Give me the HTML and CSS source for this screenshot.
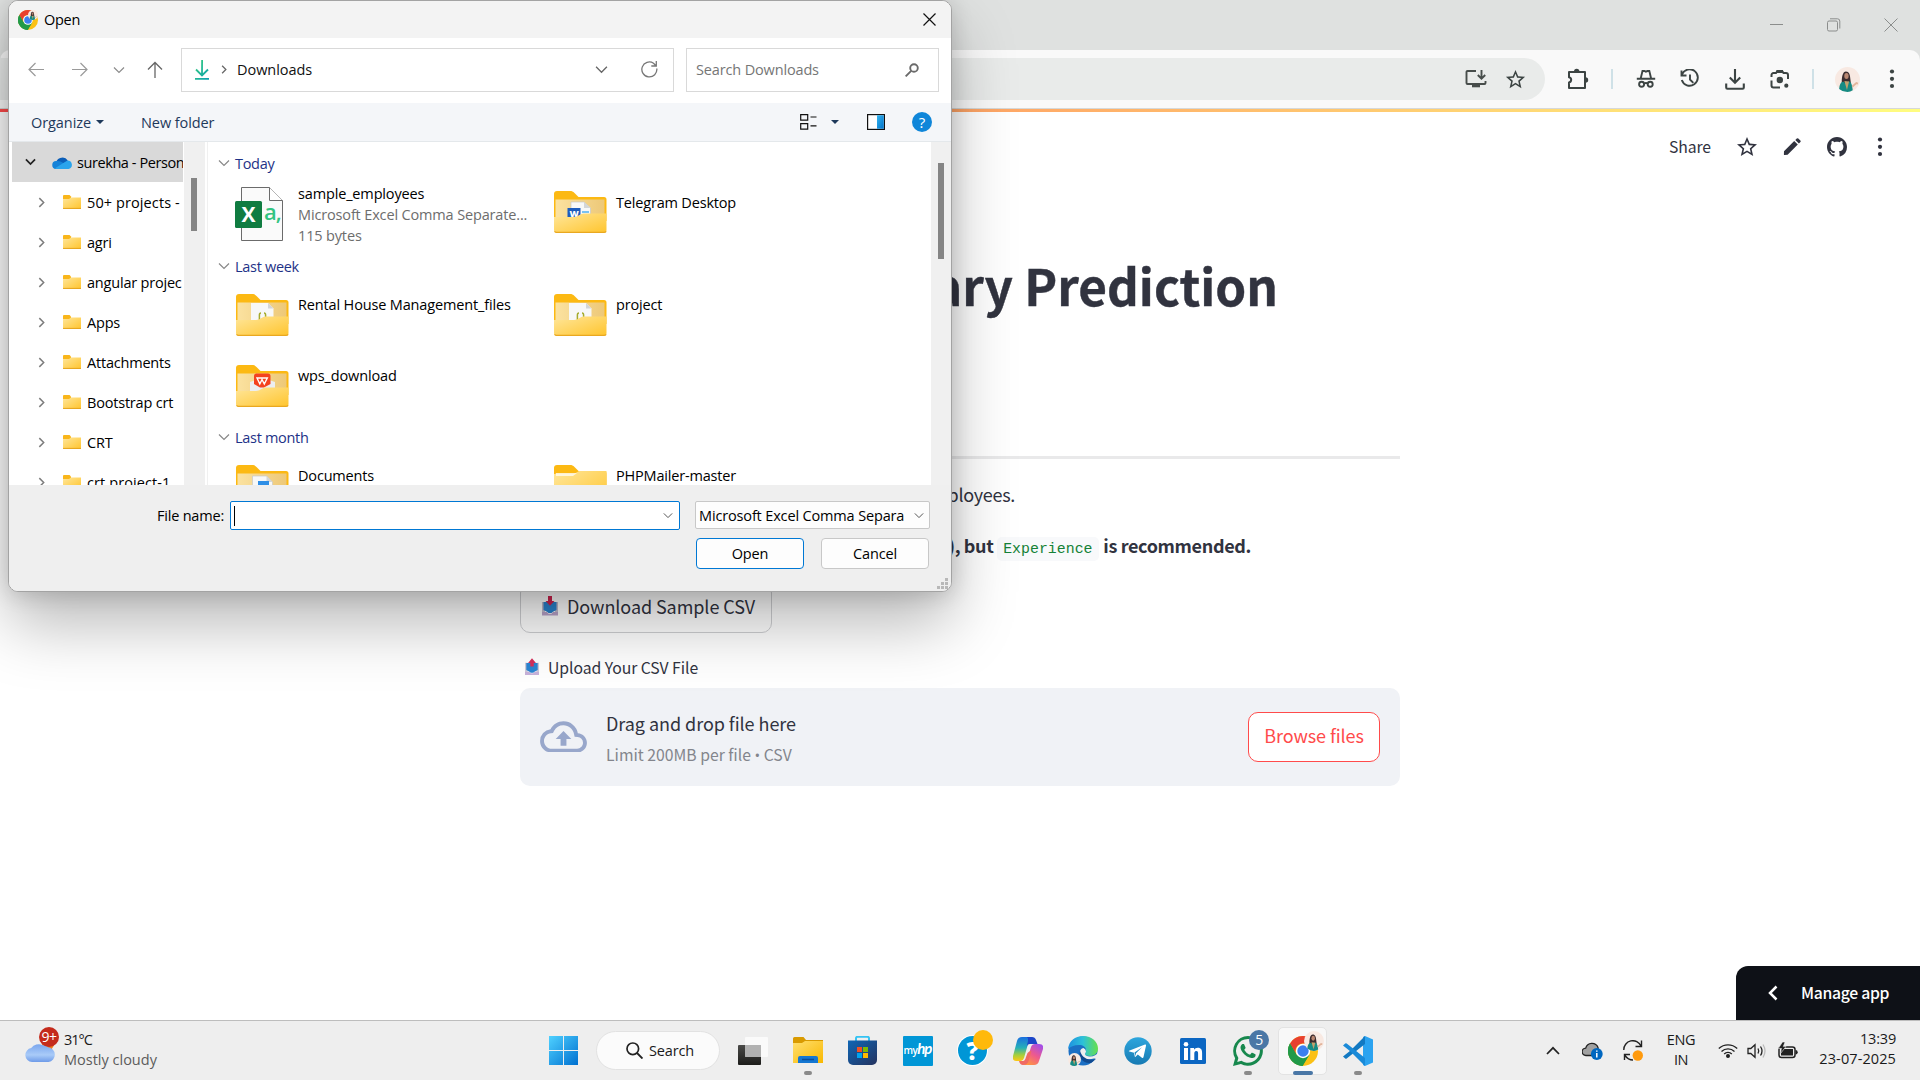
FILE: index.html
```html
<!DOCTYPE html>
<html lang="en">
<head>
<meta charset="utf-8">
<title>Salary Prediction</title>
<link rel="stylesheet" href="styles.css">
</head>
<body>
<svg class="defs" width="0" height="0" aria-hidden="true">
  <defs>
    <linearGradient id="gFront" x1="0" y1="0" x2="1" y2="1"><stop offset="0" stop-color="#ffe69a"/><stop offset="1" stop-color="#ffc52e"/></linearGradient>
    <linearGradient id="gInner" x1="0" y1="0" x2="1" y2="0"><stop offset="0" stop-color="#fbe2a0"/><stop offset="1" stop-color="#edc878"/></linearGradient>
    <linearGradient id="gDown" x1="0" y1="0" x2="1" y2="1"><stop offset="0" stop-color="#3bd07c"/><stop offset="1" stop-color="#0a9fb0"/></linearGradient>
    <linearGradient id="gPane" x1="0" y1="0" x2="1" y2="1"><stop offset="0" stop-color="#35b5f0"/><stop offset="1" stop-color="#0072c9"/></linearGradient>
    <linearGradient id="gWin" gradientUnits="userSpaceOnUse" x1="0" y1="0" x2="29" y2="29"><stop offset="0" stop-color="#4fd1ff"/><stop offset="1" stop-color="#0070d0"/></linearGradient>
    <linearGradient id="gTele" x1="0" y1="0" x2="0" y2="1"><stop offset="0" stop-color="#2ea6dd"/><stop offset="1" stop-color="#177ab3"/></linearGradient>
    <linearGradient id="gStore" x1="0" y1="0" x2="1" y2="1"><stop offset="0" stop-color="#0f66b5"/><stop offset="1" stop-color="#25335f"/></linearGradient>
    <linearGradient id="gEx" x1="0" y1="0" x2="1" y2="1"><stop offset="0" stop-color="#ffdf70"/><stop offset="1" stop-color="#f9b800"/></linearGradient>
    <linearGradient id="gEdge" x1="0" y1="0" x2="1" y2="0"><stop offset="0" stop-color="#1d8fe0"/><stop offset=".5" stop-color="#2dc1d8"/><stop offset="1" stop-color="#66e04a"/></linearGradient>
    <linearGradient id="gCopA" x1="0" y1="0" x2="0" y2="1"><stop offset="0" stop-color="#1a6fe0"/><stop offset=".45" stop-color="#25b0b8"/><stop offset=".75" stop-color="#a5cf3c"/><stop offset="1" stop-color="#ffc814"/></linearGradient>
    <linearGradient id="gCopB" x1="0.8" y1="0" x2="0.2" y2="1"><stop offset="0" stop-color="#a34ee8"/><stop offset=".5" stop-color="#ef5a8c"/><stop offset="1" stop-color="#ff9a3c"/></linearGradient>
    <linearGradient id="gCloud" x1="0" y1="0" x2="0" y2="1"><stop offset="0" stop-color="#7aa6ee"/><stop offset=".6" stop-color="#a9cbf8"/><stop offset="1" stop-color="#6e9be8"/></linearGradient>
    <linearGradient id="gTaskD" x1="0" y1="0" x2="0" y2="1"><stop offset="0" stop-color="#4a4a48"/><stop offset="1" stop-color="#1c1c1a"/></linearGradient>

    <symbol id="folder" viewBox="0 0 54 42">
      <path d="M1 3a3 3 0 0 1 3-3h13c2 0 3 .6 4.500 2l4 4H51a2.500 2.500 0 0 1 2.500 2.500V30H1z" fill="#fcb913"/>
      <path d="M2.500 8.500h49V32h-49z" fill="url(#gInner)"/>
    </symbol>
    <symbol id="folderfront" viewBox="0 0 54 42">
      <path d="M1 26h20c2 0 3-.4 4.500-1.400l2-1c1.200-.8 2.500-1.100 4-1.100H53.500V39a2.500 2.500 0 0 1-2.500 2.500H3.500A2.500 2.500 0 0 1 1 39z" fill="url(#gFront)"/>
      <path d="M1.500 40.300q.8 1 2 1H51q1.500 0 2.200-1" fill="none" stroke="#e9a820" stroke-width="1.200"/>
    </symbol>
    <symbol id="codefile" viewBox="0 0 54 42">
      <path d="M16 9h17l5.500 5.500V32H16z" fill="#f7f8f8"/><path d="M33 9l5.500 5.500H33z" fill="#d3d6d8"/>
      <path d="M26 19q-1.600 0-1.600 2v5M29 19q1.600 0 1.600 2v5" fill="none" stroke="#a5ab2d" stroke-width="1.500"/>
    </symbol>
    <symbol id="smallfolder" viewBox="0 0 18 14">
      <path d="M0 1a1 1 0 0 1 1-1h5.500l1.500 1.500V5H0z" fill="#f9b61a"/><path d="M0 4h6l2-1.500h10V13a1 1 0 0 1-1 1H1a1 1 0 0 1-1-1z" fill="url(#gFront)"/><path d="M0 13.400h18" stroke="#e5a31c" stroke-width="1"/>
    </symbol>
    <symbol id="chrome" viewBox="0 0 30 30">
      <circle cx="15" cy="15" r="15" fill="#fbc116"/>
      <path d="M2 7.500A15 15 0 0 0 14.500 30L21.200 18.500 15 15 8.500 18.700z" fill="#229a49"/>
      <path d="M2 7.500a15 15 0 0 1 13-7.500 15 15 0 0 1 13 7.500H15a7.500 7.500 0 0 0-6.500 11.300z" fill="#e8402f"/>
      <path d="M2 7.500l6.500 11.300A7.500 7.500 0 0 0 15 22.500l6.500-3.700L14.500 30A15 15 0 0 1 2 7.500z" fill="#229a49"/>
      <circle cx="15" cy="15" r="7.200" fill="#fff"/><circle cx="15" cy="15" r="5.700" fill="#3c7ff0"/>
    </symbol>
    <symbol id="avatar" viewBox="0 0 24 24">
      <circle cx="12" cy="12" r="12" fill="#f8e9e2"/>
      <path d="M6.500 15C6.500 9 7.500 4.300 10.500 4.300S14.500 7 14.800 12l.5 4H6z" fill="#3b2c2e"/>
      <ellipse cx="11" cy="8.700" rx="2.100" ry="2.900" fill="#b98670"/>
      <path d="M4 21c.3-4 1.500-6.500 4-7l2.500 2 2.500-2.300c2.500.6 3.500 3 4 8.500A12 12 0 0 1 12 24a12 12 0 0 1-8-3z" fill="#168b83"/>
      <path d="M9 13.500l2.500 8.500 2-8z" fill="#c3a06c"/><path d="M16.500 19l4-3.500 1.500.5" stroke="#e2b59c" stroke-width="1.800" fill="none"/>
    </symbol>
    <symbol id="chev" viewBox="0 0 12 8"><path d="M1 1.500l5 5 5-5" fill="none" stroke="currentColor" stroke-width="1.200"/></symbol>
    <symbol id="chevr" viewBox="0 0 8 12"><path d="M1.500 1l5 5-5 5" fill="none" stroke="currentColor" stroke-width="1.700"/></symbol>
    <symbol id="star" viewBox="0 0 24 24"><path fill="currentColor" d="M22 9.240l-7.190-.62L12 2 9.190 8.630 2 9.240l5.460 4.730L5.820 21 12 17.270 18.180 21l-1.630-7.030L22 9.240zM12 15.400l-3.760 2.270 1-4.280-3.320-2.880 4.380-.38L12 6.100l1.710 4.040 4.380.38-3.320 2.880 1 4.280L12 15.400z"/></symbol>
    <symbol id="dots" viewBox="0 0 6 20"><circle cx="3" cy="2.500" r="2.100" fill="currentColor"/><circle cx="3" cy="9.800" r="2.100" fill="currentColor"/><circle cx="3" cy="17" r="2.100" fill="currentColor"/></symbol>
  </defs>
</svg>

<div class="screen">
  <header class="titlebar">
    <svg width="14" height="14" viewBox="0 0 14 14"><path d="M0 6.500h13" stroke="#8b8d8c"/></svg>
    <svg width="14" height="14" viewBox="0 0 14 14"><rect x=".5" y="3" width="10" height="10" rx="1.500" fill="none" stroke="#8b8d8c"/><path d="M3 .8h7.500a2.300 2.300 0 0 1 2.300 2.300V10.500" fill="none" stroke="#8b8d8c"/></svg>
    <svg width="14" height="14" viewBox="0 0 14 14"><path d="M.5.500l13 13M13.500.500l-13 13" stroke="#8b8d8c"/></svg>
  </header>
  <div class="toolbar-wrap">
    <div class="toolbar">
      <div class="omnibox">
        <svg width="22" height="20" viewBox="0 0 22 20"><path d="M11 2H2.500a1 1 0 0 0-1 1v11a1 1 0 0 0 1 1h17a1 1 0 0 0 1-1v-2" fill="none" stroke="#474d4b" stroke-width="1.900"/><path d="M7 15.500h8v2.800H7z" fill="#474d4b"/><path d="M16.500 1v8M12.800 6l3.700 3.700L20.200 6" fill="none" stroke="#474d4b" stroke-width="1.900"/></svg>
        <svg width="23" height="23"><use href="#star"/></svg>
      </div>
      <svg class="i-puz" width="22" height="22" viewBox="0 0 22 22"><path d="M2 4h16v16H2v-5.500a2.700 2.700 0 0 0 0-5.300z" fill="none" stroke="#3c4443" stroke-width="2" stroke-linejoin="round"/><path d="M7 3.500a2.700 2.700 0 0 1 5.400 0zM18.500 9.300a2.700 2.700 0 0 1 0 5.400z" fill="#3c4443"/></svg>
      <i class="sep"></i>
      <svg class="i-inc" width="20" height="20" viewBox="0 0 20 20" fill="none" stroke="#3c4443" stroke-width="1.900"><path d="M.8 9.800h18.400M4.800 9L6.500 2h1.800l1.500.7L11.500 2h1.800L15 9"/><circle cx="5.600" cy="15.300" r="2.500"/><circle cx="14.200" cy="15.300" r="2.500"/><path d="M8 14.500q2-1 4 0"/></svg>
      <svg class="i-his" width="20" height="20" viewBox="0 0 20 20" fill="none" stroke="#3c4443" stroke-width="1.900"><path d="M2 5.500A8.200 8.200 0 1 1 1.800 11M1.500 1.500v5H6.500M10 5.500V10.500l3.300 3.300"/></svg>
      <svg class="i-dl" width="20" height="21" viewBox="0 0 20 21" fill="none" stroke="#3c4443" stroke-width="2.100"><path d="M10 0v13M4.800 8.500l5.200 5.200 5.200-5.200M1.200 14.500v4a1.200 1.200 0 0 0 1.200 1.200h15.200a1.200 1.200 0 0 0 1.200-1.200v-4"/></svg>
      <svg class="i-len" width="20" height="20" viewBox="0 0 20 20"><path d="M1.500 8V6a2 2 0 0 1 2-2h2.500L7.300 2.200h5L13.500 4H16a2 2 0 0 1 2 2v4M1.500 11.500v5a2 2 0 0 0 2 2H10" fill="none" stroke="#3c4443" stroke-width="2"/><path d="M6.500 1h6.500v3H6.500z" fill="#3c4443"/><circle cx="9.800" cy="11" r="3.200" fill="#3c4443"/><circle cx="16.300" cy="16.700" r="2.100" fill="#3c4443"/></svg>
      <i class="sep"></i>
      <svg class="i-ava" width="25" height="25"><use href="#avatar"/></svg>
      <svg class="i-dot" width="6" height="20"><use href="#dots"/></svg>
    </div>
  </div>
  <div class="rainbow"></div>

  <main class="app">
    <nav class="appnav">
      <span>Share</span>
      <svg width="24" height="24"><use href="#star"/></svg>
      <svg width="18" height="18" viewBox="0 0 18 18"><path d="M1 13.200L11.200 3l3.600 3.600L4.600 16.800 1.500 17q-.7 0-.6-.8zM12.300 1.900l1.500-1.400q.8-.6 1.500 0l2.100 2.100q.6.8 0 1.500L15.900 5.500z" fill="#31333f"/></svg>
      <svg width="20" height="20" viewBox="0 0 16 16"><path fill="#31333f" d="M8 0C3.580 0 0 3.580 0 8c0 3.540 2.290 6.530 5.470 7.590.4.070.55-.17.55-.38 0-.19-.01-.82-.01-1.490-2.010.37-2.530-.49-2.690-.94-.09-.23-.48-.94-.82-1.130-.28-.15-.68-.52-.01-.53.630-.01 1.080.58 1.230.82.72 1.210 1.870.87 2.330.66.070-.52.28-.87.51-1.070-1.780-.2-3.640-.89-3.640-3.950 0-.87.310-1.590.82-2.150-.08-.2-.36-1.020.08-2.120 0 0 .67-.21 2.200.82.640-.18 1.320-.27 2-.27s1.360.09 2 .27c1.530-1.040 2.200-.82 2.200-.82.440 1.100.16 1.920.08 2.120.51.560.82 1.270.82 2.150 0 3.070-1.870 3.750-3.650 3.950.29.25.54.73.54 1.480 0 1.070-.01 1.930-.01 2.200 0 .21.150.46.55.38A8.010 8.010 0 0 0 16 8c0-4.420-3.580-8-8-8z"/></svg>
      <svg width="6" height="20"><use href="#dots"/></svg>
    </nav>
    <section class="block">
      <h1>Salary Prediction</h1>
      <hr>
      <p class="line1">employees.</p>
      <p class="line2">), but <code>Experience</code> is recommended.</p>
      <button class="download"><svg width="16" height="20" viewBox="0 0 16 20"><path d="M0 6h3v11h-3zM13 6h3v11h-3z" fill="#c4bccd"/><path d="M1.500 6h13v8l-3.500 1.800L9.500 17h-3L5 15.800 1.500 14z" fill="#2a84cf"/><path d="M0 16h5l1.500 1.700h3L11 16h5v3.600H0z" fill="#b9a3c9"/><path d="M6 0h4v5h2.500L8 9.800 3.500 5H6z" fill="#d1244f"/></svg><span>Download Sample CSV</span></button>
      <label class="uplabel"><svg width="14" height="18" viewBox="0 0 16 20"><path d="M0 5h3v11h-3zM13 5h3v11h-3z" fill="#d2cbd9"/><path d="M1.500 5.500h13v8l-3.500 1.800L9.500 16.500h-3L5 15.300 1.500 13.500z" fill="#2b85d2"/><path d="M0 15.500h5l1.500 1.700h3L11 15.500h5v3.600H0z" fill="#c7b2da"/><path d="M6 9.500h4v-4h2.500L8 0 3.500 5.500H6z" fill="#d6305c"/></svg><span>Upload Your CSV File</span></label>
      <div class="drop">
        <svg width="47" height="32" viewBox="0 1.300 24 16.400"><path fill="#98a7cb" d="M19.350 8.040A7.490 7.490 0 0 0 12 2C9.110 2 6.600 3.640 5.350 6.040A5.994 5.994 0 0 0 0 12c0 3.310 2.690 6 6 6h13c2.760 0 5-2.240 5-5 0-2.640-2.050-4.780-4.650-4.960zM19 16H6c-2.210 0-4-1.790-4-4 0-2.050 1.530-3.760 3.560-3.970l1.070-.11.5-.95A5.469 5.469 0 0 1 12 4c2.620 0 4.880 1.860 5.390 4.430l.3 1.500 1.530.11A2.980 2.980 0 0 1 22 13c0 1.650-1.350 3-3 3zM8 11h2.500v3.500h3V11H16l-4-4z"/></svg>
        <div class="droptext"><strong>Drag and drop file here</strong><small>Limit 200MB per file <b>•</b> CSV</small></div>
        <button>Browse files</button>
      </div>
    </section>
    <div class="manage"><svg width="10" height="16" viewBox="0 0 10 16"><path d="M8.500 1.500L2 8l6.500 6.500" fill="none" stroke="#fff" stroke-width="2.500"/></svg><span>Manage app</span></div>
  </main>

  <footer class="taskbar">
    <div class="weather">
      <div class="wicon">
        <svg width="31" height="34" viewBox="0 0 31 34"><circle cx="23" cy="15" r="6" fill="#f07a1c"/><path d="M7 33a7 7 0 0 1-.8-13.900A9.500 9.500 0 0 1 17.500 16a7 7 0 0 1 5.500 2.300A7.400 7.400 0 0 1 23.500 33z" fill="url(#gCloud)"/></svg>
        <span class="badge red">9+</span>
      </div>
      <div class="wtext"><span class="deg">31°C</span><span>Mostly cloudy</span></div>
    </div>
    <div class="apps">
      <div class="cell"><svg width="29" height="29" viewBox="0 0 29 29"><path d="M0 0h14v14H0zM15 0h14v14H15zM0 15h14v14H0zM15 15h14v14H15z" fill="url(#gWin)"/></svg></div>
      <div class="search"><svg width="17" height="17" viewBox="0 0 17 17"><circle cx="6.800" cy="6.800" r="5.800" fill="none" stroke="#222" stroke-width="1.700"/><path d="M11 11l5.500 5.500" stroke="#222" stroke-width="1.900"/></svg><span>Search</span></div>
      <div class="cell"><svg width="30" height="28" viewBox="0 0 30 28"><rect x="0" y="8" width="23" height="20" rx="1" fill="url(#gTaskD)"/><rect x="7" y="0" width="23" height="20" rx="1" fill="#fff" opacity=".72"/><rect x="7" y="8" width="16" height="12" fill="#aaa" opacity=".75"/></svg></div>
      <div class="cell run"><svg width="30" height="27" viewBox="0 0 30 27"><path d="M0 1.500A1.500 1.500 0 0 1 1.500 0h9l2.500 3H30v8H0z" fill="#d99a00"/><path d="M0 6h9l3-2h18v22H0z" fill="url(#gEx)"/><path d="M5 26v-5a2 2 0 0 1 2-2h16a2 2 0 0 1 2 2v5z" fill="#1577d2"/><path d="M9 22.500h12" stroke="#0b4d9a" stroke-width="1.500"/></svg></div>
      <div class="cell"><svg width="29" height="29" viewBox="0 0 29 29"><path d="M8 6V2a1.500 1.500 0 0 1 1.500-1.200h10A1.500 1.500 0 0 1 21 2v4" fill="none" stroke="#35c3f3" stroke-width="2"/><path d="M0 4.500h29V24a5 5 0 0 1-5 5H5a5 5 0 0 1-5-5z" fill="url(#gStore)"/><path d="M9 11h5v5H9z" fill="#f25022"/><path d="M15 11h5v5h-5z" fill="#7fba00"/><path d="M9 17h5v5H9z" fill="#00a4ef"/><path d="M15 17h5v5h-5z" fill="#ffb900"/></svg></div>
      <div class="cell"><div class="myhp">my<b>hp</b></div></div>
      <div class="cell help"><span class="q">?</span><span class="badge yellow"></span></div>
      <div class="cell"><svg width="30" height="28" viewBox="0 0 30 28"><path d="M20 0l-3 0-6 21q-1 3-3 3H3q-4 0-3-5L4 4q1-4 5-4z" fill="url(#gCopA)"/><path d="M14 0h5q3 0 4 3l1.500 4H17q-2.500 0-3.500 3L15 4q.5-3-1-4z" fill="#1c46c8"/><path d="M10 28h11q4 0 5-4l4-12q1-5-4-5h-4q-3 0-4 3l-4 13q-1 4-4 5z" fill="url(#gCopB)"/><path d="M10 28q-3 0-4-4h4q2 0 3-4l1.500-4q1.500-2 4-2L15.500 24q-1 4-5.500 4z" fill="#f06a62"/></svg></div>
      <div class="cell"><svg width="30" height="30" viewBox="0 0 30 30"><circle cx="15" cy="15" r="14.500" fill="#1b6fc4"/><path d="M0 13C1 5 7 0 15 0c9 0 15 6 15 12.500 0 5-4 7.500-8 7.500-3.500 0-5-1-5-2s1-1.500 1-4c0-3-3-5-7-5-5 0-9 2-11 4z" fill="url(#gEdge)"/><path d="M17 18c0 1.500 2 2.500 5 2.500 4 0 7-2 8-4v6h-4q-4 1-8 1-6 0-6-7 0-4 3.500-4.500 2.500 1 2.500 3.500c0 1-1 1.500-1 2.500z" fill="#eee"/><path d="M12 15c-2 6 3 13 11 12l5-4c-5 1.500-13 1-16-8z" fill="#104a91"/><svg x="0" y="17" width="13" height="13"><use href="#avatar"/></svg></svg></div>
      <div class="cell"><svg width="28" height="28" viewBox="0 0 28 28"><circle cx="14" cy="14" r="13.700" fill="url(#gTele)"/><path d="M5 13.700L21 7.500q1.300-.3 1 1.200L19.500 20q-.4 1.300-1.600.7L13.800 17.600l-2 2q-.8.7-1-.2L10 15.700l-4.600-1.200q-1-.4-.4-.8zM10.500 15.500L18 10.300 12 16.300l-.5 2.700z" fill="#fff" fill-rule="evenodd"/></svg></div>
      <div class="cell"><svg width="26" height="26" viewBox="0 0 26 26"><rect width="26" height="26" rx="1.500" fill="#0b66c2"/><circle cx="6" cy="6.200" r="2.300" fill="#fff"/><path d="M4 10h4v12H4zM10.300 10h3.800v1.700c.7-1.200 2-2 3.700-2 3.500 0 4.300 2.300 4.300 5.400V22h-4v-6c0-1.600 0-3-1.800-3s-2 1.400-2 3v6h-4z" fill="#fff"/></svg></div>
      <div class="cell run"><svg width="30" height="30" viewBox="0 0 24 24"><path fill="#17884d" d="M17.472 14.382c-.297-.149-1.758-.867-2.030-.967-.273-.099-.471-.148-.67.150-.197.297-.767.966-.94 1.164-.173.199-.347.223-.644.075-.297-.15-1.255-.463-2.390-1.475-.883-.788-1.480-1.761-1.653-2.059-.173-.297-.018-.458.130-.606.134-.133.298-.347.446-.52.149-.174.198-.298.298-.497.099-.198.050-.371-.025-.52-.075-.149-.669-1.612-.916-2.207-.242-.579-.487-.5-.669-.51-.173-.008-.371-.01-.57-.01-.198 0-.52.074-.792.372-.272.297-1.040 1.016-1.040 2.479 0 1.462 1.065 2.875 1.213 3.074.149.198 2.096 3.200 5.077 4.487.709.306 1.262.489 1.694.625.712.227 1.360.195 1.871.118.571-.085 1.758-.719 2.006-1.413.248-.694.248-1.289.173-1.413-.074-.124-.272-.198-.57-.347"/><path fill="#17884d" fill-rule="evenodd" d="M12 0A11.900 11.900 0 0 0 1.700 17.800L0 24l6.300-1.650A11.900 11.900 0 1 0 12 0zm0 2.400a9.500 9.500 0 1 1-5.300 17.400l-3.300.9.9-3.200A9.500 9.500 0 0 1 12 2.400z"/></svg><span class="badge blue">5</span></div>
      <div class="cell active"><svg width="30" height="30"><use href="#chrome"/></svg><svg class="mini" width="20" height="20"><use href="#avatar"/></svg></div>
      <div class="cell run"><svg width="30" height="30" viewBox="0 0 30 30"><path d="M22 0l8 3.500v23L22 30l-2-1V1z" fill="#2ba3f0"/><path d="M22 0L7.500 14.500 0 20.500l2.200 2q.7.500 1.500 0L22 8z" fill="#1279c2"/><path d="M22 30L7.500 15.500 0 9.500l2.200-2q.7-.5 1.500 0L22 22z" fill="#1a8ad8"/></svg></div>
    </div>
    <div class="tray">
      <svg class="t1" width="14" height="9" viewBox="0 0 14 9"><path d="M1 8l6-6.200L13 8" fill="none" stroke="#222" stroke-width="1.700"/></svg>
      <svg class="t2" width="21" height="18" viewBox="0 0 21 18"><path d="M4 13.500a3.700 3.700 0 0 1-.3-7.400A6.500 6.500 0 0 1 16 5.500L16.500 13.500z" fill="#a0a0a0" stroke="#222" stroke-width="1.300"/><circle cx="14.800" cy="12" r="5.900" fill="#0067c0"/><path d="M14.800 11v4.500M14.800 8.400v1.400" stroke="#fff" stroke-width="1.500"/></svg>
      <svg class="t3" width="20" height="21" viewBox="0 0 20 21"><path d="M.8 10A9 9 0 0 1 18 6M18.500.5v6h-6M1.500 20v-5.500h5.500M2 15.500q3 4.500 8 4.500" fill="none" stroke="#222" stroke-width="1.400"/><circle cx="14.800" cy="15.500" r="5.200" fill="#ff9a0d"/></svg>
      <div class="lang"><span>ENG</span><span>IN</span></div>
      <svg class="t4" width="20" height="15" viewBox="0 0 20 15" fill="none" stroke="#222" stroke-width="1.400"><path d="M.8 5.500a13.500 13.500 0 0 1 18.400 0M3.500 8.400a9.500 9.500 0 0 1 13 0M6.200 11a5.700 5.700 0 0 1 7.600 0"/><circle cx="10" cy="13" r="1.300" fill="#222"/></svg>
      <svg class="t5" width="20" height="16" viewBox="0 0 20 16" fill="none" stroke="#222" stroke-width="1.300"><path d="M1 5.500h2.800L8 1.800v12.400L3.800 10.500H1z"/><path d="M11 5.500q1.500 2.500 0 5M13.500 3.500q3 4.500 0 9"/><path d="M16 1.500q4 6.500 0 13" stroke="#bbb"/></svg>
      <svg class="t6" width="20" height="17" viewBox="0 0 20 17"><rect x="1" y="5" width="16" height="10.500" rx="2.500" fill="none" stroke="#222" stroke-width="1.500"/><rect x="3" y="7" width="12" height="6.500" fill="#222"/><path d="M17.500 8v4.500q2.200 0 2.200-2.200T17.500 8z" fill="#222"/><path d="M4.500 0L.3 6.500H3.500L2.500 11.500 8 4.500H5.300L7 0z" fill="#222" stroke="#eee" stroke-width=".6"/></svg>
      <div class="clock"><span>13:39</span><span>23-07-2025</span></div>
    </div>
  </footer>

  <section class="dialog">
    <div class="dtitle">
      <span class="dlogo"><svg width="20" height="20"><use href="#chrome"/></svg><svg class="dmini" width="10" height="10"><use href="#avatar"/></svg></span>
      <span class="dname">Open</span>
      <svg width="13" height="13" viewBox="0 0 13 13"><path d="M.5.500l12 12M12.500.500l-12 12" stroke="#111" stroke-width="1.200"/></svg>
    </div>
    <div class="dnav">
      <svg class="n1" width="16" height="15" viewBox="0 0 16 15" fill="none" stroke="#9a9a9a" stroke-width="1.200"><path d="M16 7.500H1M7.500 1L1 7.500 7.500 14"/></svg>
      <svg class="n2" width="16" height="15" viewBox="0 0 16 15" fill="none" stroke="#9a9a9a" stroke-width="1.200"><path d="M0 7.500h15M8.500 1L15 7.500 8.500 14"/></svg>
      <svg class="n3" width="12" height="8"><use href="#chev"/></svg>
      <svg class="n4" width="16" height="17" viewBox="0 0 16 17" fill="none" stroke="#666" stroke-width="1.300"><path d="M8 17V1.500M1 8.500l7-7 7 7"/></svg>
      <div class="address">
        <svg width="14" height="20" viewBox="0 0 14 20" fill="none" stroke="url(#gDown)" stroke-width="1.800"><path d="M7.100 0L7 15M1 9.500l6 6 6-6M0 18.800l14 .1"/></svg>
        <svg class="crumb" width="6" height="9"><use href="#chevr"/></svg>
        <span>Downloads</span>
        <svg class="adch" width="13" height="9"><use href="#chev"/></svg>
        <svg width="17" height="17" viewBox="0 0 17 17" fill="none" stroke="#777" stroke-width="1.300"><path d="M15.800 7.500A7.500 7.500 0 1 1 12.500 2.200L15 4.700M15.300 0v5h-5"/></svg>
      </div>
      <div class="dsearch"><span>Search Downloads</span><svg width="14" height="14" viewBox="0 0 14 14" fill="none" stroke="#6a6a6a" stroke-width="1.900"><circle cx="9" cy="5" r="3.800"/><path d="M6.200 7.800L.6 13.400"/></svg></div>
    </div>
    <div class="dcmd">
      <span>Organize</span><i class="caret"></i><span class="newf">New folder</span>
      <svg class="vicon" width="17" height="17" viewBox="0 0 17 17" fill="none" stroke="#111" stroke-width="1.200"><path d="M.7.700h7v5.500h-7zM.7 9.700h7v5.500h-7zM10.500 3h6M10.500 11.800h6"/></svg>
      <i class="caret vc"></i>
      <svg class="picon" width="18" height="16" viewBox="0 0 18 16"><rect x=".6" y=".6" width="16.800" height="14.800" fill="#fff" stroke="#111" stroke-width="1.200"/><path d="M10 1.200h6.800v13.600H10z" fill="url(#gPane)"/></svg>
      <span class="dhelp">?</span>
    </div>
    <div class="dbody">
      <div class="tree">
        <div class="trow root"><svg width="11" height="8" viewBox="0 0 12 8"><path d="M1 1.200l5 5 5-5" fill="none" stroke="#222" stroke-width="1.900"/></svg><svg class="od" width="20" height="13" viewBox="0 0 20 13"><path d="M4 9A6.500 6.500 0 0 1 15.800 4.500L12 9z" fill="#0b5eb8"/><path d="M4 13a4 4 0 0 1 .5-8Q7 4.500 9.500 6L16 10l-8 3z" fill="#1582d8"/><path d="M3 12.300L9 8.500q3-2 6.500-4A4.300 4.300 0 0 1 16.500 13H4z" fill="#2aa4ec"/></svg><span>surekha - Person</span></div>
        <div class="trow"><svg width="7" height="11"><use href="#chevr"/></svg><svg class="sf" width="18" height="14"><use href="#smallfolder"/></svg><span class="wide">50+ projects -</span></div>
        <div class="trow"><svg width="7" height="11"><use href="#chevr"/></svg><svg class="sf" width="18" height="14"><use href="#smallfolder"/></svg><span>agri</span></div>
        <div class="trow"><svg width="7" height="11"><use href="#chevr"/></svg><svg class="sf" width="18" height="14"><use href="#smallfolder"/></svg><span>angular projec</span></div>
        <div class="trow"><svg width="7" height="11"><use href="#chevr"/></svg><svg class="sf" width="18" height="14"><use href="#smallfolder"/></svg><span>Apps</span></div>
        <div class="trow"><svg width="7" height="11"><use href="#chevr"/></svg><svg class="sf" width="18" height="14"><use href="#smallfolder"/></svg><span>Attachments</span></div>
        <div class="trow"><svg width="7" height="11"><use href="#chevr"/></svg><svg class="sf" width="18" height="14"><use href="#smallfolder"/></svg><span>Bootstrap crt</span></div>
        <div class="trow"><svg width="7" height="11"><use href="#chevr"/></svg><svg class="sf" width="18" height="14"><use href="#smallfolder"/></svg><span>CRT</span></div>
        <div class="trow"><svg width="7" height="11"><use href="#chevr"/></svg><svg class="sf" width="18" height="14"><use href="#smallfolder"/></svg><span class="wide">crt project-1</span></div>
      </div>
      <div class="tscroll"><i></i></div>
      <div class="files">
        <h3><svg width="12" height="8"><use href="#chev"/></svg>Today</h3>
        <div class="grid g1">
          <div class="item sample">
            <svg width="48" height="54" viewBox="0 0 48 54"><path d="M6.500.500h28l13 13v40h-41z" fill="#fafafa" stroke="#6b6b6b"/><path d="M34.500.500v13h13" fill="#fff" stroke="#6b6b6b"/><rect y="14" width="27" height="27" rx="1.500" fill="#107c41"/><text x="13.500" y="35" text-anchor="middle" class="xl">X</text><text x="29" y="33" class="xa">a,</text></svg>
            <div><p>sample_employees</p><p class="dim">Microsoft Excel Comma Separate...</p><p class="dim">115 bytes</p></div>
          </div>
          <div class="item"><svg width="54" height="42" viewBox="0 0 54 42"><use href="#folder"/><path d="M18 11h13l6.500 6V30H18z" fill="#f7f8f8" stroke="#c5c8ca" stroke-width=".7"/><path d="M31 11v6h6.500z" fill="#d3d6d8"/><path d="M29 21h7" stroke="#50b0f0" stroke-width="1.300"/><rect x="14.500" y="17" width="13" height="10" fill="#1c5cbe"/><text x="21" y="25.500" text-anchor="middle" class="wd">W</text><use href="#folderfront"/></svg><p>Telegram Desktop</p></div>
        </div>
        <h3><svg width="12" height="8"><use href="#chev"/></svg>Last week</h3>
        <div class="grid g2">
          <div class="item"><svg width="54" height="42" viewBox="0 0 54 42"><use href="#folder"/><use href="#codefile"/><use href="#folderfront"/></svg><p>Rental House Management_files</p></div>
          <div class="item"><svg width="54" height="42" viewBox="0 0 54 42"><use href="#folder"/><use href="#codefile"/><use href="#folderfront"/></svg><p>project</p></div>
          <div class="item"><svg width="54" height="42" viewBox="0 0 54 42"><use href="#folder"/><path d="M15 17l6-2h13l6 2v12H15z" fill="#eceef0"/><path d="M21 8.500h12a2.500 2.500 0 0 1 2.500 2.500v8L29 22.500h-4L19 19v-8a2.500 2.500 0 0 1 2-2.500z" fill="#f4421f"/><path d="M22 13l2.800 6L27 14.500l2.300 4.500 3-6z" fill="none" stroke="#fff" stroke-width="1.400"/><use href="#folderfront"/></svg><p>wps_download</p></div>
        </div>
        <h3><svg width="12" height="8"><use href="#chev"/></svg>Last month</h3>
        <div class="grid g3">
          <div class="item"><svg width="54" height="42" viewBox="0 0 54 42"><use href="#folder"/><path d="M17.500 11h14l6 6V30h-20z" fill="#f7f8f8" stroke="#c5c8ca" stroke-width=".7"/><path d="M31.500 11v6h6z" fill="#d3d6d8"/><path d="M23 16h11v8H20v-4h3z" fill="#2f8fe6"/><use href="#folderfront"/></svg><p>Documents</p></div>
          <div class="item"><svg width="54" height="42" viewBox="0 0 54 42"><use href="#folder"/><path d="M1 9h20l5-3h27.500v35H1z" fill="url(#gFront)"/><path d="M3 8h21l-4 3H3z" fill="#fff" opacity=".7"/></svg><p>PHPMailer-master</p></div>
        </div>
      </div>
      <div class="fscroll"><i></i></div>
    </div>
    <div class="dfoot">
      <div class="frow">
        <label>File name:</label>
        <div class="finput"><i></i><svg width="10" height="7"><use href="#chev"/></svg></div>
        <div class="fsel"><span>Microsoft Excel Comma Separa</span><svg width="10" height="7"><use href="#chev"/></svg></div>
      </div>
      <div class="fbtns"><button class="primary">Open</button><button>Cancel</button></div>
      <svg class="grip" width="12" height="12" viewBox="0 0 12 12"><path d="M8 0h3v3H8zM4 4h3v3H4zM8 4h3v3H8zM0 8h3v3H0zM4 8h3v3H4zM8 8h3v3H8z" fill="#b8b8b8"/></svg>
    </div>
  </section>
</div>
</body>
</html>
```
FILE: styles.css
```css
* { box-sizing: border-box; }
body { margin: 0; overflow: hidden; }
p, h1, h3 { margin: 0; font-weight: 400; }
svg { display: block; flex: none; }
button { padding: 0; cursor: default; }
.defs { position: absolute; }

.screen {
  position: relative; width: 1920px; height: 1080px; overflow: hidden;
  display: flex; flex-direction: column; background: #dfe1e0;
  font-family: "Open Sans", "Noto Sans", sans-serif;
  font-size: 14.5px; letter-spacing: -0.15px; color: #1a1a1a;
}

/* browser chrome */
.titlebar { height: 50px; flex: none; display: flex; justify-content: flex-end; gap: 43px; padding: 18px 22px 0 0; }
.toolbar-wrap { height: 59px; flex: none; }
.toolbar {
  height: 59px; background: #f9f9f9; border-radius: 10px 10px 0 0; border-bottom: 1px solid #d6d8d8;
  display: flex; align-items: center; color: #3c4443;
}
.omnibox {
  width: 1545px; height: 42px; border-radius: 0 21px 21px 0; background: #e9ebea;
  display: flex; align-items: center; justify-content: flex-end; gap: 17px; padding-right: 18px; color: #3c4443;
}
.i-puz { margin-left: 22px; }
.sep { width: 2px; height: 20px; background: #cfe1e7; margin-left: 22px; }
.i-inc { margin-left: 23px; }
.i-his { margin-left: 24px; }
.i-dl { margin-left: 25px; }
.i-len { margin-left: 25px; }
.i-len + .sep { margin-left: 22px; }
.i-ava { margin-left: 21px; }
.i-dot { margin-left: 29px; }
.rainbow { height: 3px; flex: none; background: linear-gradient(90deg, #ff4b4b, #fffd80); }

/* application page */
.app { flex: 1; position: relative; background: #fff; color: #31333f; font-family: "Noto Sans CJK SC", "Source Sans Pro", sans-serif; font-size: 18px; letter-spacing: -0.08px; }
.appnav { height: 70px; padding-right: 37px; display: flex; align-items: center; justify-content: flex-end; }
.appnav span { font-size: 15.75px; margin: -2px 24px 0 0; }
.appnav svg:nth-of-type(1) { margin-right: 24px; }
.appnav svg:nth-of-type(2) { margin-right: 26px; }
.appnav svg:nth-of-type(3) { margin-right: 30px; }
.block { width: 880px; margin-left: 520px; }
h1 { height: 105px; margin-top: 67px; line-height: 72px; font-size: 49.5px; font-weight: 700; letter-spacing: 0; -webkit-text-stroke: .4px #31333f; text-align: right; padding-right: 122px; }
hr { height: 3px; border: 0; margin: 102px 0 0; background: #e9e9ea; }
.line1, .line2 { text-align: right; white-space: nowrap; line-height: 32px; }
.line1 { margin-top: 19px; padding-right: 385px; letter-spacing: -0.3px; }
.line2 { margin-top: 19px; padding-right: 149px; font-weight: 700; letter-spacing: -0.35px; }
.line2 code { font: 400 14.9px/25px "Liberation Mono", monospace; letter-spacing: 0; color: #158237; background: #f8f9fb; border-radius: 5px; padding: 4px 6px; margin: 0 1px 0 0; }
.download {
  margin-top: 21px; width: 252px; height: 50px; border: 1px solid #cfd0d3; border-radius: 10px; background: #fff;
  display: flex; align-items: center; gap: 9px; padding: 0 0 4px 21px; font: inherit; letter-spacing: -0.08px; color: inherit;
}
.uplabel { height: 55px; display: flex; align-items: center; gap: 9px; padding: 14px 0 0 5px; font-size: 15.75px; letter-spacing: -0.06px; }
.uplabel svg { margin-top: -2px; }
.drop { height: 98px; background: #f0f2f6; border-radius: 10px; display: flex; align-items: center; padding: 0 20px; }
.drop > svg { margin-top: -2px; }
.droptext { margin: 3px 0 0 19px; flex: 1; display: flex; flex-direction: column; }
.droptext strong { font-weight: 400; line-height: 32px; letter-spacing: -0.05px; }
.droptext small { font-size: 15.75px; line-height: 31px; color: #83858c; letter-spacing: 0; }
.droptext b { font: 400 15px "Open Sans", sans-serif; }
.drop button { width: 132px; height: 50px; border: 1px solid #ff4b4b; border-radius: 10px; background: #fff; color: #ff4b4b; font: inherit; letter-spacing: -0.1px; padding-bottom: 4px; }
.manage {
  position: absolute; right: 0; bottom: 0; width: 184px; height: 54px; background: #0e1117; color: #fff; border-radius: 12px 0 0 0;
  display: flex; align-items: center; padding-left: 32px; gap: 23px; font-size: 15.75px; font-weight: 500; letter-spacing: -0.3px;
}
.manage span { margin-top: -2px; }

/* taskbar */
.taskbar { height: 60px; flex: none; background: #eee; border-top: 1px solid #bdbdbd; display: grid; grid-template-columns: 536px 850px 1fr; align-items: center; }
.weather { display: flex; padding-left: 25px; align-items: center; }
.wicon { position: relative; width: 39px; height: 59px; padding-top: 9px; }
.wicon .badge { left: 14px; top: 6px; }
.wicon svg { margin-top: -1px; }
.wtext { display: flex; flex-direction: column; line-height: 20px; color: #5c5c5c; letter-spacing: 0; margin-top: -2px; }
.wtext .deg { color: #1a1a1a; letter-spacing: -1px; }
.badge { position: absolute; width: 20px; height: 20px; border-radius: 50%; color: #fff; text-align: center; font-size: 14px; line-height: 20px; letter-spacing: -0.5px; }
.red { background: #c42b1c; }
.yellow { background: #ffb90b; left: 28px; top: 4px; }
.blue { background: #4a77a6; left: 29px; top: 4px; }
.apps { display: flex; align-items: center; }
.cell { position: relative; width: 55px; height: 48px; display: flex; align-items: center; justify-content: center; }
.search { width: 124px; height: 39px; margin: 0 5px; border: 1px solid #e2e2e2; border-radius: 20px; background: #fbfbfb; display: flex; align-items: center; gap: 6px; padding-left: 29px; }
.run::after, .active::after { content: ""; position: absolute; bottom: 0; width: 8px; height: 4px; border-radius: 2px; background: #8a8a8a; }
.cell .badge { margin-top: -1px; }
.active::before { content: ""; position: absolute; inset: 0 3px; background: #f8f8f8; border: 1px solid #e3e3e3; border-radius: 5px; }
.active > svg { position: relative; }
.active::after { width: 20px; background: #4a77a6; }
.active .mini { position: absolute; left: 29px; top: 4px; }
.myhp { width: 30px; height: 30px; border-radius: 1px; background: #0096d6; color: #fff; font: 600 10px/29px "Open Sans", sans-serif; text-align: center; letter-spacing: -0.6px; }
.myhp b { font: italic 700 15px/20px Lato, sans-serif; letter-spacing: -1px; }
.q { width: 29px; height: 29px; border-radius: 50%; background: #0096d6; box-shadow: 0 0 0 1px #fff; color: #fff; font: 800 24px/29px "Open Sans", sans-serif; text-align: center; }
.tray { display: flex; align-items: center; height: 59px; padding-left: 160px; letter-spacing: -0.1px; }
.t2 { margin-left: 22px; }
.t3 { margin-left: 20px; }
.lang { width: 40px; margin: -2px 0 0 18px; text-align: center; line-height: 20px; display: flex; flex-direction: column; letter-spacing: -0.4px; }
.t4 { margin-left: 17px; }
.t5 { margin-left: 9px; }
.t6 { margin-left: 11px; }
.clock { flex: 1; padding-right: 24px; text-align: right; line-height: 20px; display: flex; flex-direction: column; margin-top: -3px; letter-spacing: 0.1px; }
.clock span:first-child { letter-spacing: -0.2px; }

/* file picker window */
.dialog {
  position: absolute; left: 8px; top: 0; width: 944px; height: 592px; border: 1px solid #a3a3a3; border-radius: 10px; overflow: hidden;
  background: #fff; color: #000; display: flex; flex-direction: column;
  box-shadow: 0 32px 64px rgba(0,0,0,.28), 0 2px 21px rgba(0,0,0,.16);
}
.dtitle { height: 37px; flex: none; background: #f3f3f3; display: flex; align-items: center; padding: 0 15px 0 9px; }
.dlogo { position: relative; width: 26px; }
.dmini { position: absolute; left: 10px; top: 0; }
.dname { flex: 1; letter-spacing: -0.3px; }
.dnav { height: 65px; flex: none; display: flex; align-items: center; padding: 0 0 2px 19px; }
.n2 { margin-left: 28px; }
.n3 { margin-left: 25px; color: #8c8c8c; }
.n4 { margin-left: 22px; }
.address { width: 493px; height: 44px; border: 1px solid #d9d9d9; margin-left: 18px; display: flex; align-items: center; padding: 0 15px 0 13px; color: #666; }
.address span { flex: 1; color: #111; margin-left: 10px; letter-spacing: -0.05px; }
.crumb { margin-left: 12px; }
.adch { margin-right: 33px; }
.dsearch { width: 253px; height: 44px; margin-left: 12px; border: 1px solid #d9d9d9; display: flex; align-items: center; justify-content: space-between; padding: 0 19px 0 9px; color: #767676; }
.dcmd { height: 39px; flex: none; background: #f4f6f9; border-bottom: 1px solid #e4e8eb; display: flex; align-items: center; padding-left: 22px; color: #1e395b; letter-spacing: -0.08px; }
.caret { border: 4px solid transparent; border-top-color: #1e395b; border-bottom: 0; margin-left: 5px; }
.newf { margin-left: 37px; flex: 1; }
.vc { margin-left: 14px; }
.picon { margin-left: 28px; }
.dhelp { width: 20px; height: 20px; margin: 0 19px 0 27px; border-radius: 50%; background: #0f86d9; color: #fff; text-align: center; font-size: 15px; line-height: 20px; }
.dbody { height: 343px; flex: none; display: flex; overflow: hidden; }
.tree { width: 174px; padding-left: 3px; overflow: hidden; }
.trow { height: 40px; display: flex; align-items: center; padding-left: 26px; white-space: nowrap; color: #7d7d7d; overflow: hidden; }
.trow span { color: #000; letter-spacing: -0.2px; margin-left: 6px; }
.trow .wide { letter-spacing: 0.1px; }
.sf { margin: -1px 0 0 18px; }
.root { background: #d9d9d9; padding-left: 13px; }
.trow.root span { margin-left: 5px; letter-spacing: -0.42px; }
.od { margin-left: 16px; }
.tscroll { width: 21px; margin-left: 1px; background: #f0f0f0; padding: 36px 0 0 7px; }
.tscroll i, .fscroll i { display: block; width: 6px; background: #858585; }
.tscroll i { height: 53px; }
.files { flex: 1; border-left: 1px solid #f0f0f0; margin-left: 2px; padding: 2px 0 0 10px; overflow: hidden; }
.files h3 { height: 38px; display: flex; align-items: center; gap: 5px; font-size: 14.5px; letter-spacing: -0.3px; color: #1e3287; }
.files h3 svg { color: #888; }
.grid { display: grid; grid-template-columns: 318px 318px; padding-left: 17px; }
.g1 { height: 65px; }
.g2 { height: 133px; grid-template-rows: 71px 62px; }
.item { display: flex; gap: 9px; white-space: nowrap; line-height: 21px; padding-top: 9px; }
.g1 .item > p { margin-top: 1px; }
.item > p { height: 21px; letter-spacing: -0.15px; }
.g3 .item p, .g1 .item > p { letter-spacing: -0.18px; }
.sample { padding-top: 1px; gap: 15px; }
.sample svg { margin-top: 4px; }
.dim { color: #6d6d6d; }
.xl { font: 700 21px "Open Sans", sans-serif; fill: #fff; }
.xa { font: 600 22px "Open Sans", sans-serif; fill: #33c481; letter-spacing: -1px; }
.wd { font: 800 9px "Open Sans", sans-serif; fill: #fff; }
.fscroll { width: 20px; background: #f0f0f0; padding: 21px 0 0 7px; }
.fscroll i { height: 96px; }
.dfoot { position: relative; flex: 1; background: #efefef; padding: 16px 21px 0 0; }
.frow, .fbtns { display: flex; justify-content: flex-end; }
.frow label { line-height: 30px; margin-right: 6px; letter-spacing: -0.2px; }
.finput { width: 450px; height: 29px; background: #fff; border: 1px solid #0078d4; border-radius: 2px; display: flex; align-items: center; justify-content: space-between; padding: 0 6px 0 3px; color: #555; }
.finput i { width: 1px; height: 20px; background: #000; }
.fsel { width: 235px; height: 28px; margin-left: 15px; background: #fdfdfd; border: 1px solid #c8c8c8; border-radius: 2px; display: flex; align-items: center; justify-content: space-between; padding: 0 5px 0 3px; white-space: nowrap; color: #555; }
.fsel span { color: #000; }
.fbtns { margin-top: 7px; gap: 17px; padding-right: 1px; }
.fbtns button { width: 108px; height: 31px; border: 1px solid #c8c8c8; border-radius: 4px; background: #fdfdfd; font: inherit; letter-spacing: -0.15px; color: #000; }
.fbtns .primary { border-color: #0078d4; }
.grip { position: absolute; right: 2px; bottom: 1px; }
```
